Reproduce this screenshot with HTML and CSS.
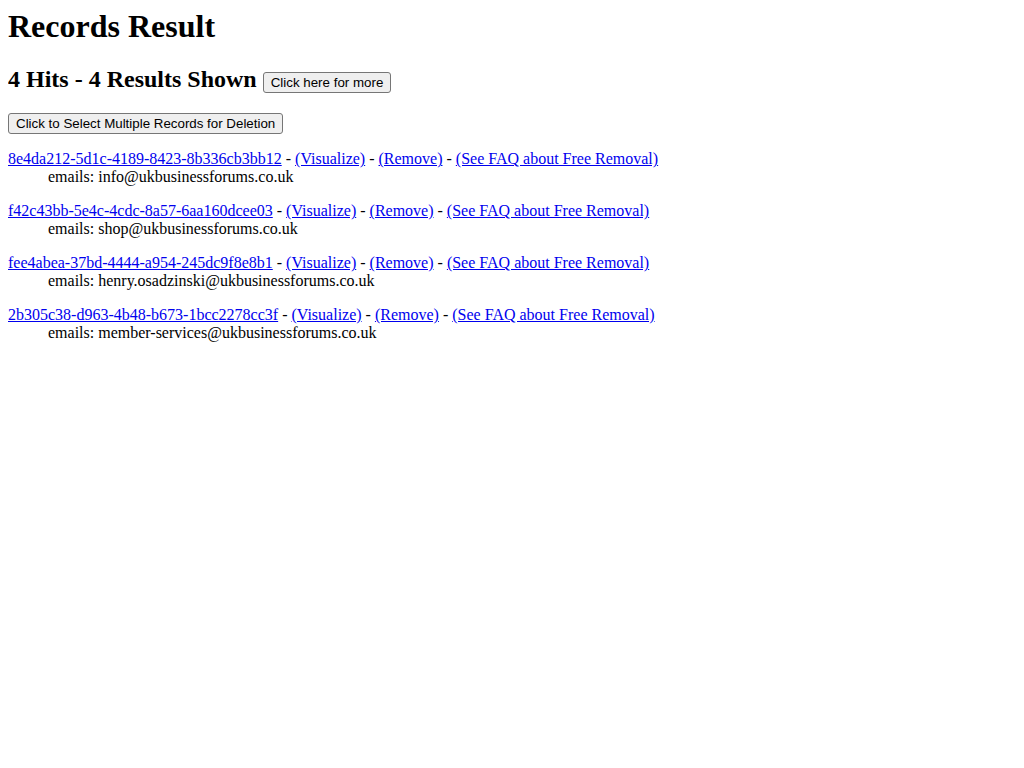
FILE: index.html
```html
<!DOCTYPE html>
<html>
<head>
<meta charset="utf-8">
<title>Records Result</title>
<link rel="stylesheet" href="styles.css">
</head>
<body class="page">
<h1 class="title">Records Result</h1>
<h2 class="hits">4 Hits - 4 Results Shown <button class="btn" type="button">Click here for more</button></h2>
<form class="select-form">
<button class="btn" type="button">Click to Select Multiple Records for Deletion</button>
</form>
<dl class="record">
<dt><a href="#">8e4da212-5d1c-4189-8423-8b336cb3bb12</a> - <a href="#">(Visualize)</a> - <a href="#">(Remove)</a> - <a href="#">(See FAQ about Free Removal)</a></dt>
<dd>emails: info@ukbusinessforums.co.uk</dd>
</dl>
<dl class="record">
<dt><a href="#">f42c43bb-5e4c-4cdc-8a57-6aa160dcee03</a> - <a href="#">(Visualize)</a> - <a href="#">(Remove)</a> - <a href="#">(See FAQ about Free Removal)</a></dt>
<dd>emails: shop@ukbusinessforums.co.uk</dd>
</dl>
<dl class="record">
<dt><a href="#">fee4abea-37bd-4444-a954-245dc9f8e8b1</a> - <a href="#">(Visualize)</a> - <a href="#">(Remove)</a> - <a href="#">(See FAQ about Free Removal)</a></dt>
<dd>emails: henry.osadzinski@ukbusinessforums.co.uk</dd>
</dl>
<dl class="record">
<dt><a href="#">2b305c38-d963-4b48-b673-1bcc2278cc3f</a> - <a href="#">(Visualize)</a> - <a href="#">(Remove)</a> - <a href="#">(See FAQ about Free Removal)</a></dt>
<dd>emails: member-services@ukbusinessforums.co.uk</dd>
</dl>
</body>
</html>
```
FILE: styles.css
```css
html { background: #fff; }
.page {
  margin: 8px;
  font-family: "Liberation Serif", "Times New Roman", serif;
  font-size: 16px;
  color: #000;
}
.title {
  font-size: 32px;
  font-weight: bold;
  margin: 0 0 21.44px;
}
.hits {
  font-size: 24px;
  font-weight: bold;
  margin: 21.44px 0 19.92px;
}
.btn {
  font-family: "Liberation Sans", Arial, sans-serif;
  font-size: 13.333px;
  padding: 2px 7px;
  border: 1px solid #767676;
  border-radius: 3px;
  background: #efefef;
  color: #000;
  vertical-align: baseline;
}
.select-form {
  margin: 0;
}
.record {
  margin: 16px 0;
}
.record dd {
  margin-left: 40px;
}
.record a {
  color: #0000ee;
}
```
